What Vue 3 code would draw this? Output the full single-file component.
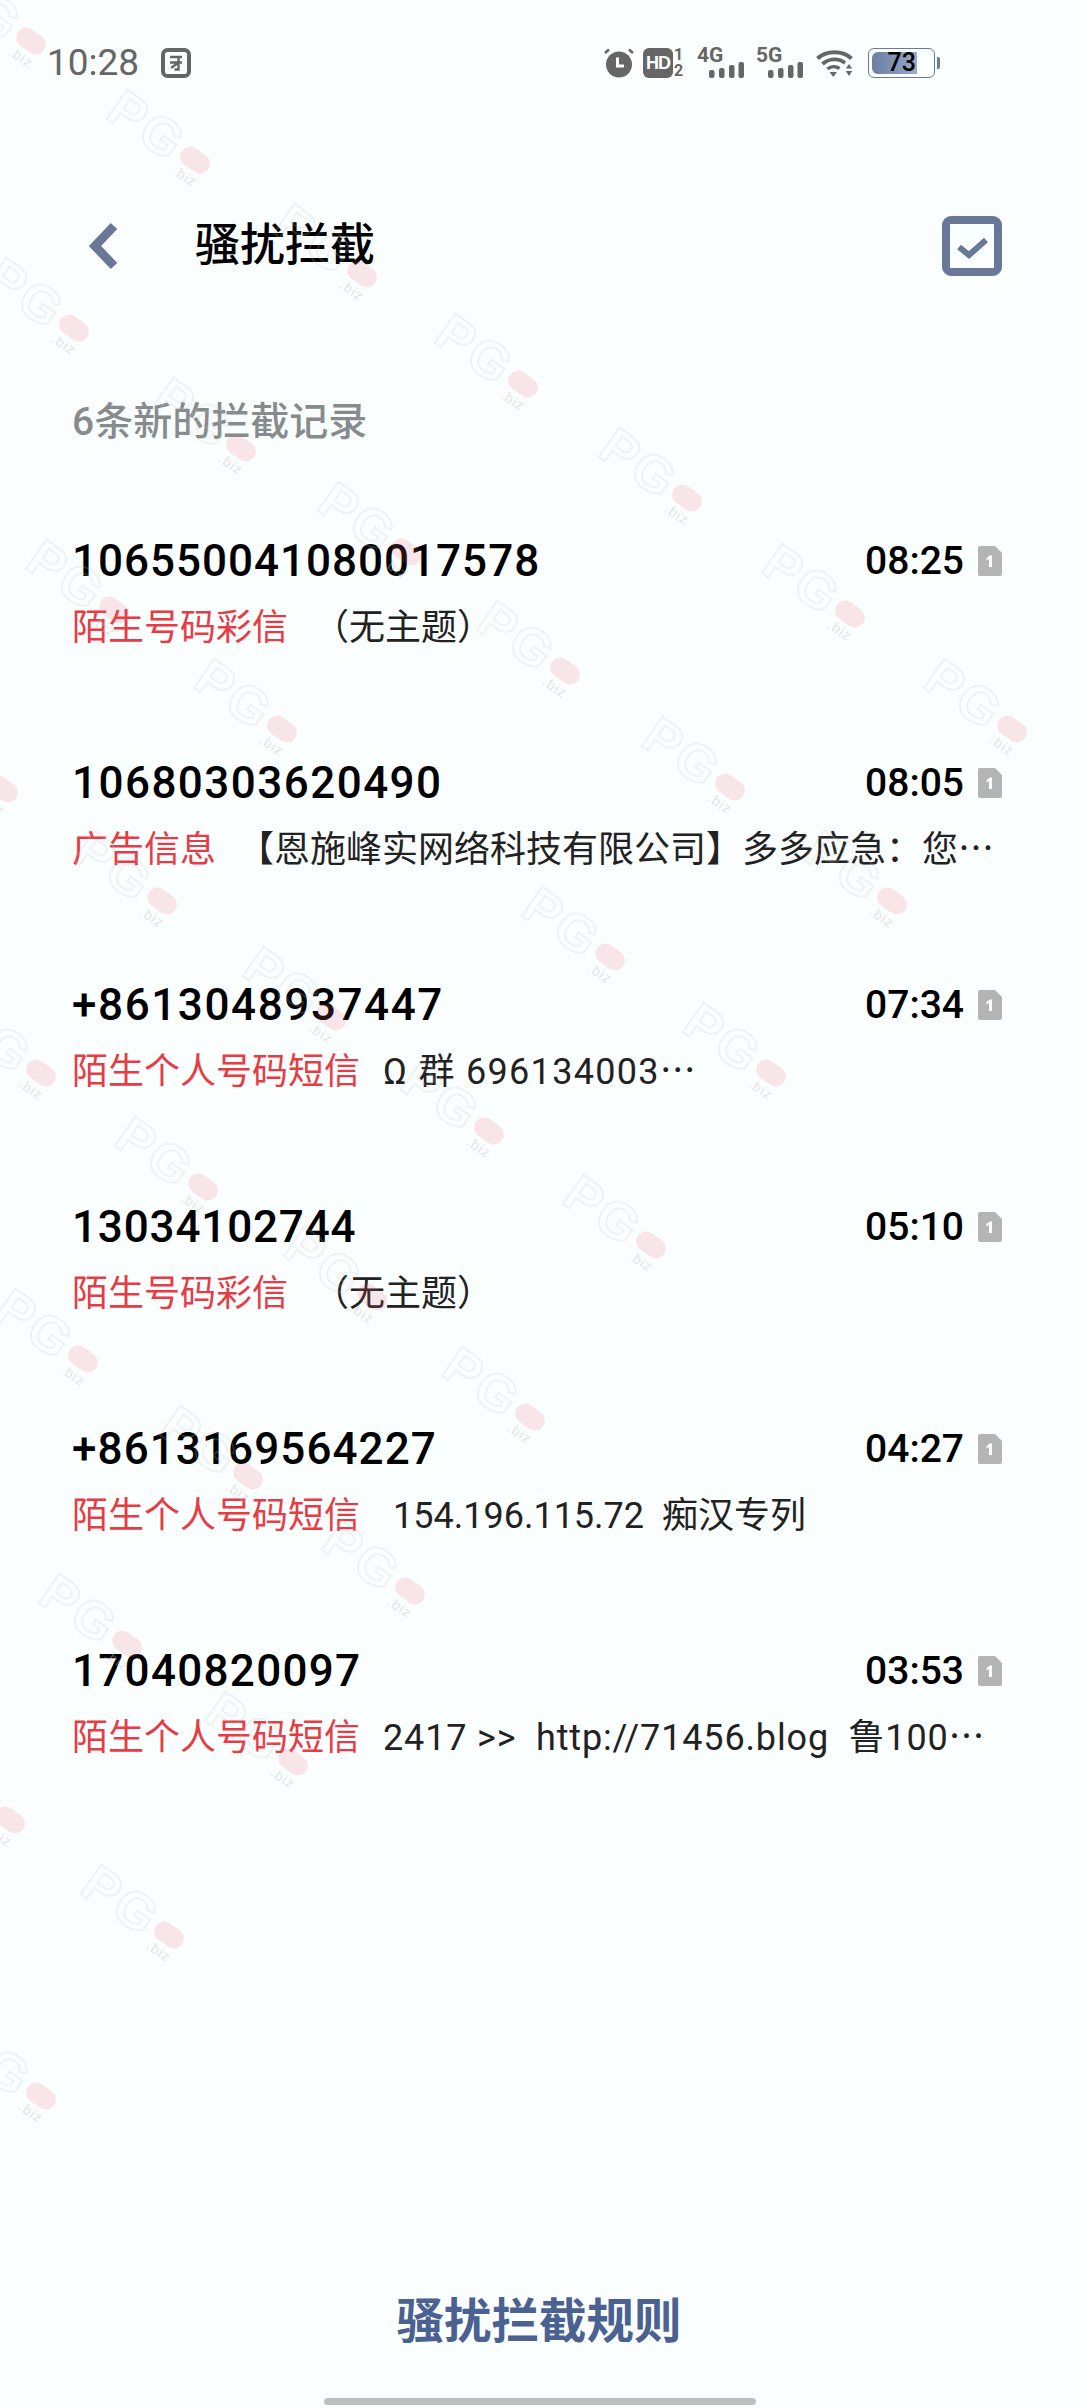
<script setup>
const rows = [
  { num: '106550041080017578', ns: 1, time: '08:25', tag: '陌生号码彩信', text: '（无主题）', gap: 25, ls: 0 },
  { num: '10680303620490', ns: 1.46, time: '08:05', tag: '广告信息', text: '【恩施峰实网络科技有限公司】多多应急：您⋯', gap: 22, ls: 0 },
  { num: '+8613048937447', ns: 1.6, time: '07:34', tag: '陌生个人号码短信', text: 'Ω 群 696134003⋯', gap: 23, ls: 1.3 },
  { num: '13034102744', ns: 0.85, time: '05:10', tag: '陌生号码彩信', text: '（无主题）', gap: 25, ls: 0 },
  { num: '+8613169564227', ns: 1.1, time: '04:27', tag: '陌生个人号码短信', text: '154.196.115.72  痴汉专列', gap: 33, ls: 0 },
  { num: '17040820097', ns: 1.3, time: '03:53', tag: '陌生个人号码短信', text: '2417 >>  http://71456.blog  鲁100⋯', gap: 23, ls: 0.85 },
]
const marks = [
  [31, 41], [195, 160], [362, 274], [74, 328], [523, 384], [241, 448], [687, 498], [406, 552],
  [114, 610], [850, 614], [565, 671], [282, 729], [1012, 729], [730, 787], [3, 789], [162, 901],
  [892, 901], [610, 957], [331, 1017], [771, 1073], [41, 1073], [489, 1131], [203, 1187],
  [651, 1245], [372, 1297], [83, 1359], [530, 1417], [248, 1476], [410, 1591], [127, 1644],
  [293, 1762], [10, 1820], [169, 1935], [41, 2096],
]
</script>

<template>
  <div class="page">
    <div class="status">
      <div class="status-left">
        <span class="clock">10:28</span>
        <svg class="sim" width="30" height="30" viewBox="0 0 30 30">
          <rect x="2" y="2" width="26" height="26" rx="4.500" fill="none" stroke="#666" stroke-width="4" />
          <path d="M9 9h12M9 14.500h12M17.500 9v12.500h-4M17 15l-7 5" fill="none" stroke="#666" stroke-width="2.400" />
        </svg>
      </div>
      <div class="status-right">
        <svg class="alarm" width="30" height="30" viewBox="0 0 30 30">
          <circle cx="15" cy="16.500" r="13" fill="#666" />
          <path d="M1 5l4-3.500M29 5l-4-3.500" stroke="#666" stroke-width="2.600" />
          <path d="M13.500 9.500v8.500h6.500" fill="none" stroke="#fff" stroke-width="3" />
        </svg>
        <div class="hd">
          <span class="hd-box">HD</span>
          <span class="hd-nums"><span>1</span><span>2</span></span>
        </div>
        <div class="net">
          <span class="net-label">4G</span>
          <svg class="bars" width="35" height="16" viewBox="0 0 35 16">
            <rect x="0" y="8" width="5.500" height="8" rx="2" fill="#666" />
            <rect x="10" y="6" width="5.500" height="10" rx="2" fill="#666" />
            <rect x="20" y="3" width="5.500" height="13" rx="2" fill="#666" />
            <rect x="29.500" y="0" width="5.500" height="16" rx="2" fill="#666" />
          </svg>
        </div>
        <div class="net">
          <span class="net-label">5G</span>
          <svg class="bars" width="35" height="16" viewBox="0 0 35 16">
            <rect x="0" y="8" width="5.500" height="8" rx="2" fill="#666" />
            <rect x="10" y="6" width="5.500" height="10" rx="2" fill="#666" />
            <rect x="20" y="3" width="5.500" height="13" rx="2" fill="#666" />
            <rect x="29.500" y="0" width="5.500" height="16" rx="2" fill="#666" />
          </svg>
        </div>
        <svg class="wifi" width="37" height="28" viewBox="0 0 37 28">
          <path d="M1.500 9.500C10 1 27 1 35.500 9.500" fill="none" stroke="#666" stroke-width="4" />
          <path d="M6.500 15C13 9 23 9 29 14" fill="none" stroke="#666" stroke-width="3.800" />
          <path d="M11.500 20C15 17 20 17 23.500 19.500" fill="none" stroke="#666" stroke-width="3.600" />
          <path d="M13.500 23h7.500l-3.700 5zM33 15l3.200 4.500h-6.400zM29.800 22h6.400L33 27z" fill="#666" />
        </svg>
        <div class="battery">
          <div class="battery-shell">
            <div class="battery-fill"><span>73</span></div>
          </div>
          <div class="battery-nub"></div>
        </div>
      </div>
    </div>

    <header class="bar">
      <div class="bar-left">
        <svg width="30" height="48" viewBox="0 0 30 48">
          <path d="M26 4L7 24l19 20" fill="none" stroke="#697896" stroke-width="9" stroke-linejoin="miter" />
        </svg>
        <h1 class="title">骚扰拦截</h1>
      </div>
      <svg width="60" height="60" viewBox="0 0 60 60">
        <rect x="4" y="4" width="52" height="52" rx="5" fill="none" stroke="#697896" stroke-width="8" />
        <path d="M17 31l10 8 17-15" fill="none" stroke="#697896" stroke-width="6" />
      </svg>
    </header>

    <div class="section">6条新的拦截记录</div>

    <div class="list">
      <div v-for="r in rows" :key="r.num" class="row">
        <div class="row-top">
          <span class="num" :style="{ letterSpacing: r.ns + 'px' }">{{ r.num }}</span>
          <div class="meta">
            <span class="time">{{ r.time }}</span>
            <svg width="24" height="30" viewBox="0 0 24 30">
              <path d="M2 0h15l7 7v21a2 2 0 0 1-2 2H2a2 2 0 0 1-2-2V2a2 2 0 0 1 2-2z" fill="#b4b4b4" />
              <path d="M8.500 12l3.500-2.500h2V21h-3v-8l-2.500 1.500z" fill="#fff" />
            </svg>
          </div>
        </div>
        <div class="row-sub">
          <span class="tag">{{ r.tag }}</span>
          <span class="msg" :style="{ marginLeft: r.gap + 'px', letterSpacing: r.ls + 'px' }">{{ r.text }}</span>
        </div>
      </div>
    </div>

    <footer class="foot">
      <div class="rules">骚扰拦截规则</div>
      <div class="home"></div>
    </footer>

    <div class="marks" aria-hidden="true">
      <div v-for="(m, i) in marks" :key="i" class="mark" :style="{ left: m[0] + 'px', top: m[1] + 'px' }">
        <span class="mark-pg">PG</span>
        <span class="mark-biz">.biz</span>
        <span class="mark-pill"></span>
      </div>
    </div>
  </div>
</template>

<style>
html, body { margin: 0; background: #fbfeff; }
</style>

<style scoped>
.page {
  position: relative;
  width: 1080px;
  height: 2408px;
  overflow: hidden;
  display: flex;
  flex-direction: column;
  background: #fbfeff;
  font-family: Roboto, "Noto Sans CJK SC", sans-serif;
  color: #000;
}
.status {
  height: 126px;
  padding: 0 140px 0 47px;
  display: flex;
  align-items: center;
  justify-content: space-between;
  box-sizing: border-box;
}
.status-left { display: flex; align-items: center; gap: 22px; }
.clock { font-size: 37px; color: #666; line-height: 44px; }
.status-right { display: flex; align-items: center; gap: 12px; }
.alarm { margin-right: -3px; }
.hd { display: flex; align-items: stretch; gap: 1px; height: 30px; }
.hd-box {
  width: 30px;
  background: #666;
  color: #fff;
  border-radius: 6px;
  font: 700 18px/30px "Liberation Sans", sans-serif;
  letter-spacing: -1px;
  text-align: center;
}
.hd-nums {
  display: flex;
  flex-direction: column;
  justify-content: space-between;
  color: #666;
  font: 700 16px/14px Roboto, sans-serif;
  width: 11px;
}
.net { position: relative; width: 47px; height: 30px; }
.net-label {
  position: absolute;
  left: 0;
  top: -3px;
  color: #666;
  font: 700 21px/21px Roboto, sans-serif;
}
.bars { position: absolute; right: 0; bottom: 0; }
.wifi { margin-left: 1px; }
.battery { display: flex; align-items: center; gap: 2px; margin-left: 3px; }
.battery-shell {
  width: 67px;
  height: 30px;
  box-sizing: border-box;
  border: 1.5px solid #6c7a96;
  border-radius: 6px;
  padding: 2.500px 3px;
}
.battery-fill {
  width: 45px;
  height: 22px;
  box-sizing: border-box;
  padding-right: 1px;
  border-radius: 6px 0 0 6px;
  background: linear-gradient(90deg, #6a7ea6, #9aaac6);
  text-align: right;
  font: 500 25px/22px Roboto, sans-serif;
  color: #000;
}
.battery-nub { width: 3px; height: 12px; background: #6c7a96; border-radius: 0 2px 2px 0; }

.bar {
  margin-top: 90px;
  height: 60px;
  padding: 0 78px 0 88px;
  display: flex;
  align-items: center;
  justify-content: space-between;
}
.bar-left { display: flex; align-items: center; gap: 77px; }
.title { margin: 0; font-size: 45px; font-weight: 500; line-height: 60px; }
.section {
  margin-top: 121px;
  padding-left: 72px;
  font-size: 39px;
  font-weight: 500;
  line-height: 50px;
  color: #888b8d;
}
.list { margin-top: 86px; display: flex; flex-direction: column; }
.row { height: 222px; padding: 0 78px 0 72px; box-sizing: border-box; }
.row-top {
  height: 56px;
  display: flex;
  align-items: center;
  justify-content: space-between;
}
.num { font-size: 44px; font-weight: 500; line-height: 56px; }
.meta { display: flex; align-items: center; gap: 14px; }
.time { font-size: 39px; font-weight: 500; line-height: 56px; }
.row-sub {
  margin-top: 11px;
  height: 56px;
  display: flex;
  align-items: center;
  font-size: 36px;
  line-height: 56px;
  white-space: pre;
}
.tag { color: #e63c44; }
.msg { color: #222; }

.foot { margin-top: auto; display: flex; flex-direction: column; align-items: center; }
.rules { font-size: 47.500px; font-weight: 700; line-height: 60px; color: #4a6191; margin-left: -2px; }
.home { margin-top: 46px; margin-bottom: 3px; width: 432px; height: 7px; border-radius: 4px; background: #bdbdbf; }

.marks { position: absolute; inset: 0; pointer-events: none; }
.mark { position: absolute; width: 0; height: 0; transform: rotate(35deg); }
.mark-pg {
  position: absolute;
  right: 18px;
  top: -27px;
  color: transparent;
  -webkit-text-stroke: 2px rgba(190, 195, 198, 0.2);
  font: 700 52px/52px "Liberation Sans", sans-serif;
  letter-spacing: 3px;
}
.mark-biz {
  position: absolute;
  right: -14px;
  top: 11px;
  color: rgba(190, 195, 198, 0.45);
  font: 400 14px/16px "Liberation Sans", sans-serif;
  letter-spacing: 1px;
}
.mark-pill {
  position: absolute;
  left: -16px;
  top: -10px;
  width: 32px;
  height: 20px;
  border-radius: 10px;
  background: rgba(232, 100, 110, 0.16);
}
</style>
